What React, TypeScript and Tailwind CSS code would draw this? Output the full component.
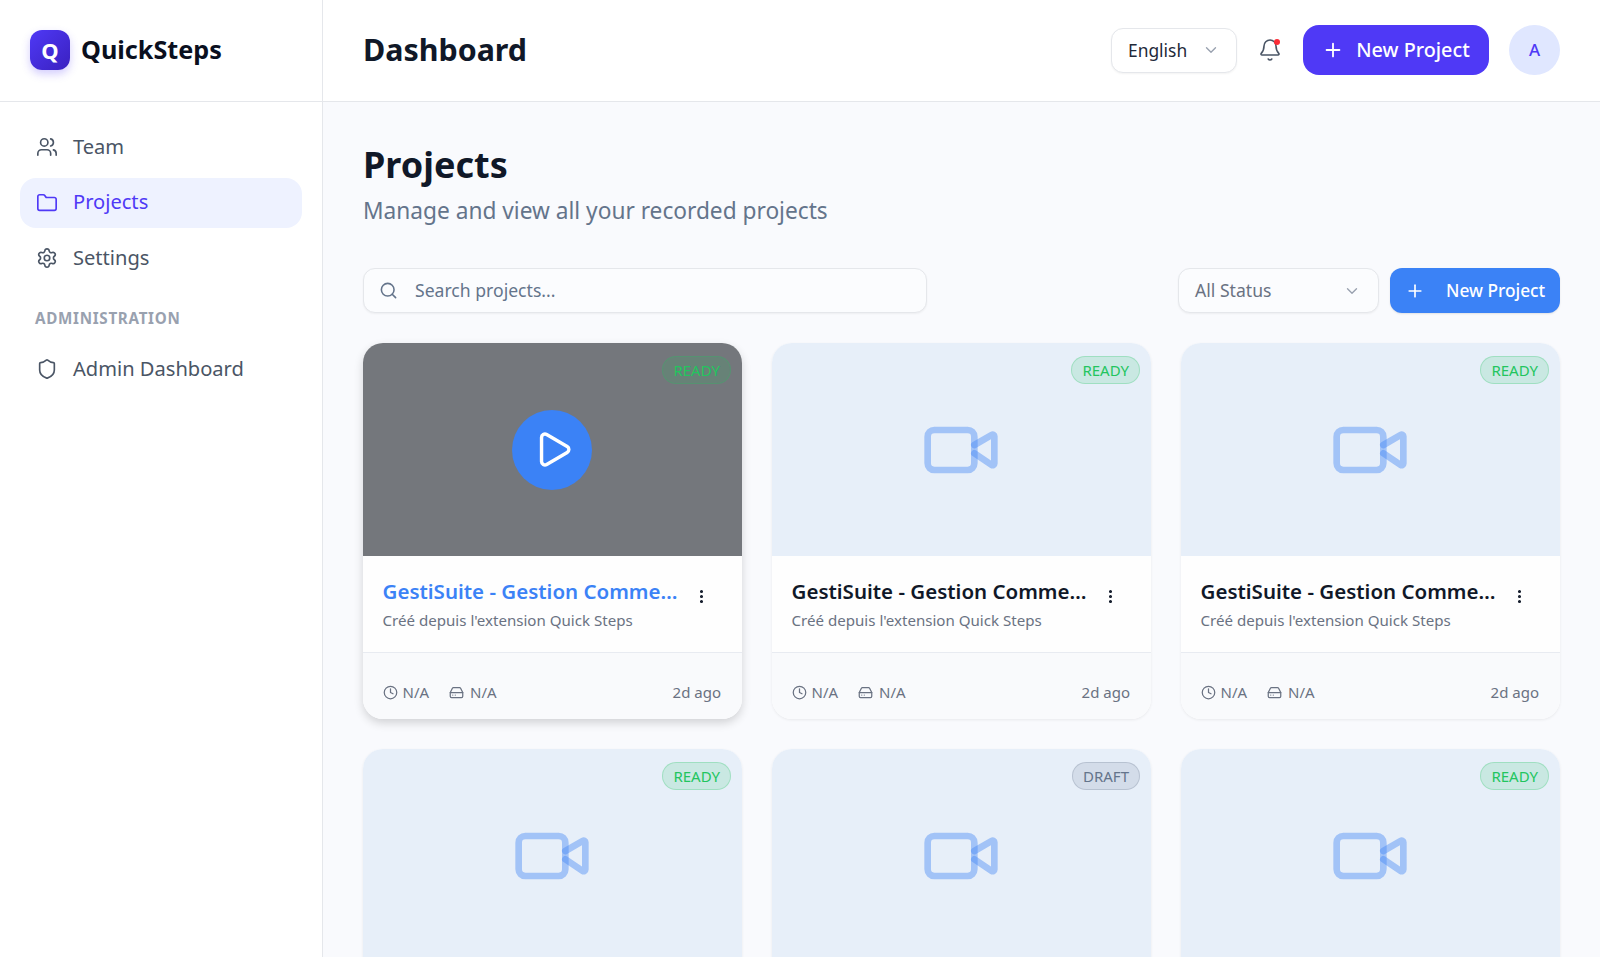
import React from "react";
import { Users, Folder, Settings, Shield, ChevronDown, Bell, Plus, Search, Play, EllipsisVertical, Clock, HardDrive } from "lucide-react";

function VideoIcon() {
  return (
    <svg width="80" height="80" viewBox="0 0 24 24" fill="none" stroke="#3b82f6" strokeOpacity="0.4" strokeWidth="2" strokeLinecap="round" strokeLinejoin="round">
      <path d="m16 13 5.223 3.482a.5.5 0 0 0 .777-.416V7.87a.5.5 0 0 0-.752-.432L16 10.5" />
      <rect x="2" y="6" width="14" height="12" rx="2" />
    </svg>
  );
}

function NavItem({ icon, label, active }: { icon: React.ReactNode; label: string; active?: boolean }) {
  return (
    <div className={active ? "flex h-[50px] items-center gap-[15px] rounded-2xl bg-[#eef2ff] px-4 text-[#4f39f6]" : "flex h-[50px] items-center gap-[15px] rounded-2xl px-4 text-[#4a5565]"}>
      {icon}
      <span className="text-[20.1px]">{label}</span>
    </div>
  );
}

type Card = { status: "READY" | "DRAFT"; active?: boolean };

function ProjectCard({ status, active }: Card) {
  const badge = status === "READY"
    ? "border-[#22c55e]/25 bg-[#22c55e]/15 text-[#22c55e]"
    : "border-[#64748b]/25 bg-[#64748b]/15 text-[#64748b]";
  return (
    <div className={active ? "overflow-hidden rounded-[20px] bg-white shadow-[0_4px_10px_rgba(0,0,0,0.16)]" : "overflow-hidden rounded-[20px] bg-white shadow-[0_1px_3px_rgba(0,0,0,0.07)]"}>
      <div className={active ? "relative flex h-[213px] items-center justify-center bg-[#74777c]" : "relative flex h-[213px] items-center justify-center bg-[#e7eff9]"}>
        {active ? (
          <div className="flex h-20 w-20 items-center justify-center rounded-full bg-[#3b82f6]">
            <Play size={41} color="#ffffff" strokeWidth={2} className="ml-[3px]" />
          </div>
        ) : (
          <VideoIcon />
        )}
        <span className={`absolute right-[11px] top-[13px] rounded-full border px-[10px] text-[15px] leading-[26px] ${badge}`}>{status}</span>
      </div>
      <div className="flex h-[97px] items-start justify-between border-b border-[#e8ebf1] bg-[#fefefe] pl-[20px] pr-[32px] pt-[21px]">
        <div className="min-w-0">
          <div className={active ? "w-[298px] truncate text-[20.5px] font-semibold leading-[28px] text-[#3b82f6]" : "w-[298px] truncate text-[20.5px] font-semibold leading-[28px] text-[#101828]"}>GestiSuite - Gestion Commerciale</div>
          <div className="mt-[4px] text-[15.1px] leading-[22px] text-[#6a7282]">Créé depuis l'extension Quick Steps</div>
        </div>
        <EllipsisVertical size={17} strokeWidth={2.4} className="mt-[11px] text-[#101828]" />
      </div>
      <div className="flex h-[66px] items-center justify-between bg-[#f9fafc] pl-[20px] pr-[21px] pt-[13px] text-[15px] text-[#6a7282]">
        <div className="flex items-center gap-[20px]">
          <span className="flex items-center gap-[5px]"><Clock size={15} />N/A</span>
          <span className="flex items-center gap-[6px]"><HardDrive size={15} />N/A</span>
        </div>
        <span>2d ago</span>
      </div>
    </div>
  );
}

const cards: Card[] = [
  { status: "READY", active: true },
  { status: "READY" },
  { status: "READY" },
  { status: "READY" },
  { status: "DRAFT" },
  { status: "READY" },
];

export default function App() {
  return (
    <div className="flex h-[957px] overflow-hidden bg-[#f9fafd] font-['Noto_Sans',sans-serif]">
      <aside className="h-full w-[323px] shrink-0 border-r border-[#e5e7eb] bg-white">
        <div className="flex h-[102px] items-center gap-[11px] border-b border-[#e5e7eb] pb-px pl-[30px]">
          <div className="flex h-10 w-10 items-center justify-center rounded-xl bg-gradient-to-br from-[#4f39f6] to-[#3a20c0] text-[22px] font-bold text-white shadow-[0_4px_8px_rgba(79,57,246,0.25)]">Q</div>
          <span className="text-[25.2px] font-bold text-[#0a0f1e]">QuickSteps</span>
        </div>
        <nav className="flex flex-col gap-[5.5px] px-5 pt-[20px]">
          <NavItem icon={<Users size={22} strokeWidth={1.8} />} label="Team" />
          <NavItem active icon={<Folder size={22} strokeWidth={1.8} />} label="Projects" />
          <NavItem icon={<Settings size={22} strokeWidth={1.8} />} label="Settings" />
          <div className="pb-[11px] pl-[15px] pt-[19px] text-[15.2px] font-bold leading-[20px] tracking-[0.7px] text-[#99a1af]">ADMINISTRATION</div>
          <NavItem icon={<Shield size={22} strokeWidth={1.8} />} label="Admin Dashboard" />
        </nav>
      </aside>
      <div className="flex min-w-0 flex-1 flex-col">
        <header className="flex h-[102px] shrink-0 items-center justify-between border-b border-[#e5e7eb] bg-white pb-px pl-[40px] pr-[40px]">
          <h1 className="text-[30.4px] font-bold text-[#101828]">Dashboard</h1>
          <div className="flex items-center">
            <div className="flex h-[45px] w-[126px] items-center justify-between rounded-xl border border-[#e5e7eb] bg-white pl-4 pr-[16px] text-[17.4px] text-[#1e2939] shadow-[0_1px_2px_rgba(0,0,0,0.05)]">
              English
              <ChevronDown size={18} strokeWidth={1.8} className="text-[#99a1af]" />
            </div>
            <div className="relative ml-[20px] flex h-[26px] w-[26px] items-center justify-center">
              <Bell size={24} strokeWidth={1.6} className="text-[#4a5565]" />
              <span className="absolute right-[3px] top-[2px] h-[6px] w-[6px] rounded-full bg-[#fb2c36]" />
            </div>
            <div className="ml-[20px] flex h-[50px] w-[186px] items-center justify-center gap-[12px] rounded-2xl bg-[#4f39f6] text-[19.8px] font-medium text-white">
              <Plus size={22} />New Project
            </div>
            <div className="ml-[20px] flex h-[50px] w-[51px] items-center justify-center rounded-full bg-[#e0e7ff] text-[17px] font-medium text-[#4f39f6]">A</div>
          </div>
        </header>
        <main className="px-[40px] pt-[36px]">
          <h2 className="text-[36px] font-bold leading-[54px] text-[#101828]">Projects</h2>
          <p className="mt-[4px] text-[22.7px] leading-[30px] text-[#64748b]">Manage and view all your recorded projects</p>
          <div className="mt-[42px] flex items-center">
            <div className="flex h-[45px] w-[564px] items-center gap-[17px] rounded-xl border border-[#e5e7eb] bg-[#fbfcfe] pl-[15px] text-[17.6px] text-[#64748b] shadow-[0_1px_2px_rgba(0,0,0,0.05)]">
              <Search size={19} />
              Search projects...
            </div>
            <div className="ml-auto flex h-[45px] w-[201px] items-center justify-between rounded-xl border border-[#e5e7eb] bg-[#fbfcfe] pl-[16px] pr-[17px] text-[17.6px] text-[#6a7282] shadow-[0_1px_2px_rgba(0,0,0,0.05)]">
              All Status
              <ChevronDown size={18} strokeWidth={1.8} className="text-[#99a1af]" />
            </div>
            <div className="ml-[11px] flex h-[45px] w-[170px] items-center gap-[21px] rounded-xl bg-[#3b82f6] pl-[15px] text-[17.3px] font-medium text-white shadow-[0_1px_2px_rgba(0,0,0,0.1)]">
              <Plus size={20} />New Project
            </div>
          </div>
          <div className="ml-[-0.5px] mt-[30px] grid grid-cols-3 gap-x-[29.5px] gap-y-[30px]">
            {cards.map((c, i) => <ProjectCard key={i} {...c} />)}
          </div>
        </main>
      </div>
    </div>
  );
}
